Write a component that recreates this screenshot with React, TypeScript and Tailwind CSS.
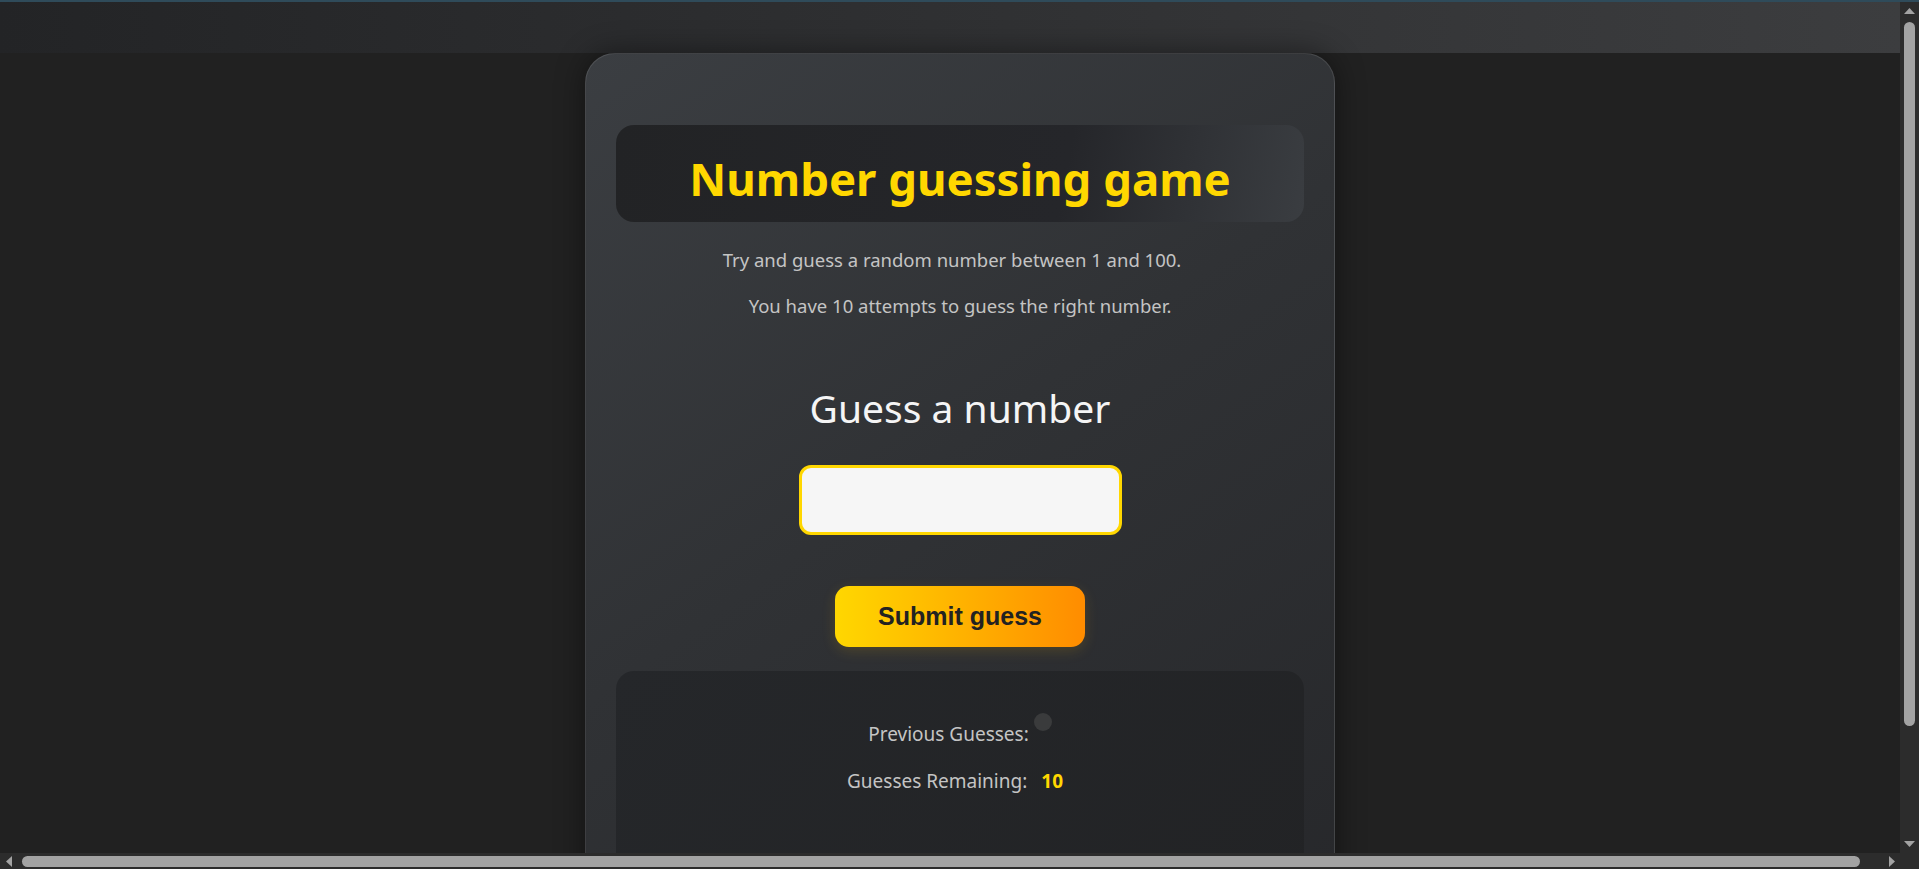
import React from "react";

// Number guessing game — single card on a dark page, with the browser chrome strips drawn in

const FONT = "font-['Noto_Sans',_'Open_Sans',_sans-serif]";

function UpArrow() {
  return (
    <svg width="11" height="7" viewBox="0 0 11 7">
      <path d="M5.5 0 L11 6 L0 6 Z" fill="#a3a3a3" />
    </svg>
  );
}

function DownArrow() {
  return (
    <svg width="11" height="7" viewBox="0 0 11 7">
      <path d="M0 0 L11 0 L5.5 6 Z" fill="#a3a3a3" />
    </svg>
  );
}

function LeftArrow() {
  return (
    <svg width="7" height="11" viewBox="0 0 7 11">
      <path d="M6 0 L6 11 L0 5.5 Z" fill="#a3a3a3" />
    </svg>
  );
}

function RightArrow() {
  return (
    <svg width="7" height="11" viewBox="0 0 7 11">
      <path d="M0 0 L0 11 L6 5.5 Z" fill="#a3a3a3" />
    </svg>
  );
}

function GameCard() {
  return (
    <div
      className={`mx-auto w-[750px] shrink-0 rounded-[30px] border border-white/10 bg-[linear-gradient(145deg,#3b3e42_0%,#303235_45%,#26272a_100%)] px-[30px] pt-[71px] pb-[40px] shadow-[0_0_30px_rgba(0,0,0,0.45)] ${FONT}`}
    >
      {/* Title banner */}
      <div className="flex h-[97px] items-center justify-center rounded-[18px] bg-[linear-gradient(100deg,#222325_0%,#25262a_65%,#3a3d41_100%)] pt-[10px]">
        <h1 className="text-[45.5px] font-bold leading-none text-[#FFD700]">
          Number guessing game
        </h1>
      </div>

      <p className="mt-[24px] pr-[16px] text-center text-[18.5px] leading-[27px] text-[#c4c4c4]">
        Try and guess a random number between 1 and 100.
      </p>
      <p className="mt-[19px] text-center text-[18.5px] leading-[27px] text-[#c4c4c4]">
        You have 10 attempts to guess the right number.
      </p>

      <h2 className="mt-[66px] text-center text-[39px] leading-[46px] text-[#f5f5f5]">
        Guess a number
      </h2>

      <div className="mt-[34px] flex justify-center">
        <input
          type="number"
          className="h-[70px] w-[323px] rounded-[12px] border-[3px] border-[#FFD700] bg-[#f6f6f6] px-3 text-[24px] text-[#222] outline-none"
        />
      </div>

      <div className="mt-[51px] flex justify-center">
        <button className="h-[61px] w-[250px] rounded-[14px] bg-gradient-to-r from-[#FFD700] to-[#FF8C00] font-['Liberation_Sans',_Arial,_sans-serif] text-[25px] font-bold text-[#222] shadow-[0_4px_14px_rgba(255,190,0,0.15)]">
          Submit guess
        </button>
      </div>

      {/* Stats panel */}
      <div className="mt-[24px] h-[260px] rounded-[18px] bg-[linear-gradient(135deg,#25272a_0%,#222325_100%)] pt-[50px]">
        <div className="flex justify-center text-[19px] leading-[27px] text-[#c4c4c4]">
          <span>Previous Guesses:</span>
          <span className="-mt-[8px] ml-[5px] h-[18px] w-[18px] self-start rounded-full bg-[#3a3b3c]" />
        </div>
        <div className="mt-[20px] flex justify-center gap-[14px] pr-[10px] text-[19px] leading-[27px] text-[#c4c4c4]">
          <span>Guesses Remaining:</span>
          <span className="font-bold text-[#FFD700]">10</span>
        </div>
      </div>
    </div>
  );
}

export default function App() {
  return (
    <div className="flex h-screen w-screen flex-col overflow-hidden bg-[#212121]">
      {/* window edge */}
      <div className="h-[2px] w-full shrink-0 bg-[#2f4b5a]" />

      <div className="flex min-h-0 flex-1">
        {/* page */}
        <div className="flex min-w-0 flex-1 flex-col overflow-hidden">
          <div className="h-[51px] w-full shrink-0 bg-gradient-to-r from-[#232426] to-[#3c3d3f]" />
          <div className="flex w-[1920px] flex-1 flex-col">
            <GameCard />
          </div>
        </div>

        {/* vertical scrollbar */}
        <div className="flex w-[19px] shrink-0 flex-col items-center bg-[#2c2c2c] pt-[6px] pb-[5px]">
          <UpArrow />
          <div className="mt-[7px] h-[704px] w-[11px] rounded-full bg-[#a3a3a3]" />
          <div className="flex-1" />
          <DownArrow />
        </div>
      </div>

      {/* horizontal scrollbar */}
      <div className="flex h-[16px] shrink-0">
        <div className="flex flex-1 items-center bg-[#2c2c2c] pl-[6px] pr-[4px]">
          <LeftArrow />
          <div className="ml-[9px] h-[11px] w-[1838px] rounded-full bg-[#a3a3a3]" />
          <div className="flex-1" />
          <RightArrow />
        </div>
        <div className="w-[19px] bg-[#2c2c2c]" />
      </div>
    </div>
  );
}
